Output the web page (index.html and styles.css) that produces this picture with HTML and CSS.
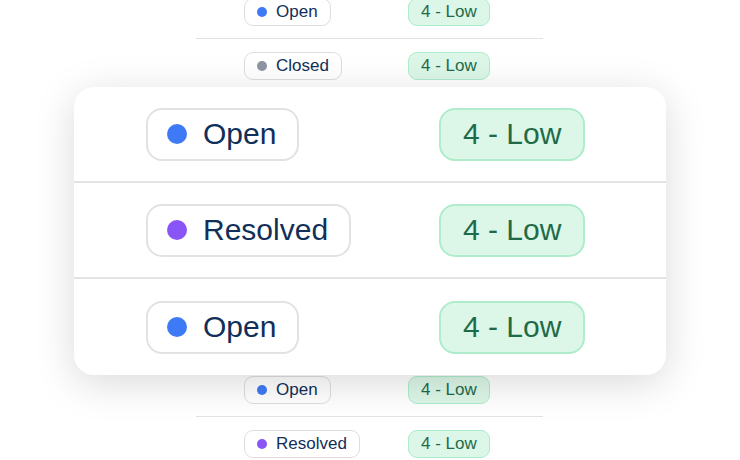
FILE: index.html
```html
<!DOCTYPE html>
<html lang="en">
<head>
    <meta charset="UTF-8">
    <meta name="viewport" content="width=device-width, initial-scale=1.0">
    <title>Ticket Status</title>
    <link rel="stylesheet" href="styles.css">
</head>
<body>
    <div class="stage">
        <!-- list behind the zoomed card -->
        <div class="table">
            <div class="row">
                <span class="status"><i class="dot open"></i>Open</span>
                <span class="priority">4 - Low</span>
            </div>
            <div class="row">
                <span class="status"><i class="dot closed"></i>Closed</span>
                <span class="priority">4 - Low</span>
            </div>
            <div class="row under">
                <span class="status"><i class="dot open"></i>Open</span>
                <span class="priority">4 - Low</span>
            </div>
            <div class="row under">
                <span class="status"><i class="dot resolved"></i>Resolved</span>
                <span class="priority">4 - Low</span>
            </div>
            <div class="row under">
                <span class="status"><i class="dot open"></i>Open</span>
                <span class="priority">4 - Low</span>
            </div>
            <div class="row under">
                <span class="status"><i class="dot closed"></i>Closed</span>
                <span class="priority">4 - Low</span>
            </div>
            <div class="row under">
                <span class="status"><i class="dot open"></i>Open</span>
                <span class="priority">4 - Low</span>
            </div>
            <div class="row">
                <span class="status"><i class="dot open"></i>Open</span>
                <span class="priority">4 - Low</span>
            </div>
            <div class="row">
                <span class="status"><i class="dot resolved"></i>Resolved</span>
                <span class="priority">4 - Low</span>
            </div>
        </div>

        <div class="zoom-card">
            <div class="row">
                <span class="status"><i class="dot open"></i>Open</span>
                <span class="priority">4 - Low</span>
            </div>
            <div class="row">
                <span class="status"><i class="dot resolved"></i>Resolved</span>
                <span class="priority">4 - Low</span>
            </div>
            <div class="row">
                <span class="status"><i class="dot open"></i>Open</span>
                <span class="priority">4 - Low</span>
            </div>
        </div>
    </div>
</body>
</html>
```

FILE: styles.css
```css
body {
    margin: 0;
    background: #fff;
    font-family: 'Liberation Sans', Arial, sans-serif;
    color: #112f59;
    overflow: hidden;
}
.stage {
    position: relative;
    width: 740px;
    height: 460px;
    overflow: hidden;
}
.table {
    width: 347px;
    margin: -15px 0 0 196px;
}
.row {
    display: grid;
    align-items: center;
    justify-items: start;
}
.table .row {
    grid-template-columns: 164px auto;
    height: 53px;
    padding-left: 48px;
    border-bottom: 1px solid #e2e2e2;
}
/* rows hidden behind the card */
.table .row.under {
    visibility: hidden;
}
.status {
    display: inline-flex;
    align-items: center;
    box-sizing: border-box;
    height: 28px;
    padding: 0 12px;
    border: 1px solid #dedede;
    border-radius: 9px;
    background: #fff;
    font-size: 17px;
    white-space: nowrap;
}
.dot {
    width: 10px;
    height: 10px;
    border-radius: 50%;
    margin-right: 9px;
    flex-shrink: 0;
}
.dot.open { background: #3f7af6; }
.dot.closed { background: #8f94a2; }
.dot.resolved { background: #8a55f7; }
.priority {
    display: inline-flex;
    align-items: center;
    box-sizing: border-box;
    height: 28px;
    padding: 0 12px;
    border: 1px solid #aeeccb;
    border-radius: 9px;
    background: #dcf7e7;
    color: #1f6b49;
    font-size: 17px;
    white-space: nowrap;
}

/* magnified card */
.zoom-card {
    position: absolute;
    left: 74px;
    top: 87px;
    width: 592px;
    background: #fff;
    border-radius: 20px;
    box-shadow: 0 8px 40px rgba(0, 0, 0, 0.15);
    overflow: hidden;
}
.zoom-card .row {
    grid-template-columns: 293px auto;
    height: 94px;
    padding-left: 72px;
    border-bottom: 2px solid #e4e4e4;
}
.zoom-card .row:last-child {
    height: 96px;
    border-bottom: none;
}
.zoom-card .status {
    height: 53px;
    padding: 0 21px 0 19px;
    border-width: 2px;
    border-color: #e2e2e2;
    border-radius: 16px;
    font-size: 30px;
}
.zoom-card .dot {
    width: 20px;
    height: 20px;
    margin-right: 16px;
}
.zoom-card .priority {
    height: 53px;
    padding: 0 22px;
    border-width: 2px;
    border-radius: 16px;
    font-size: 30px;
}
```
